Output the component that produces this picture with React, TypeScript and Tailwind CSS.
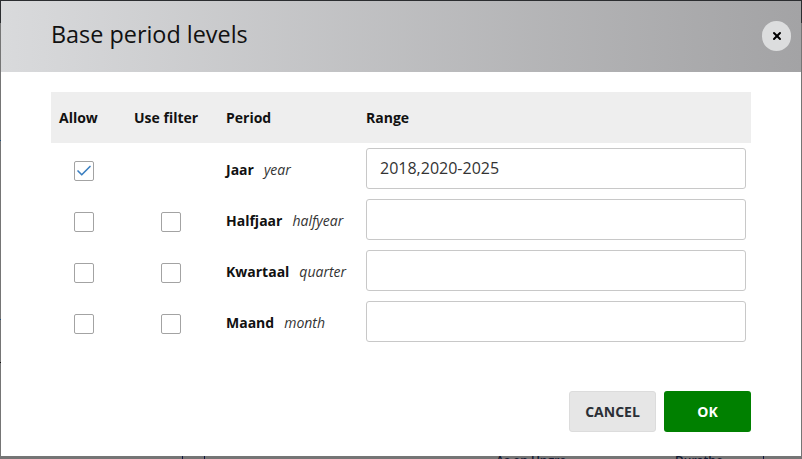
import { useState } from 'react';
import { Check, X } from 'lucide-react';

const levels = [
  { name: 'Jaar', unit: 'year', allow: true, filter: false, range: '2018,2020-2025' },
  { name: 'Halfjaar', unit: 'halfyear', allow: false, filter: true, range: '' },
  { name: 'Kwartaal', unit: 'quarter', allow: false, filter: true, range: '' },
  { name: 'Maand', unit: 'month', allow: false, filter: true, range: '' }
];

const Box = ({ checked }: { checked?: boolean }) => (
  <span className="flex h-5 w-5 items-center justify-center rounded-[2px] border border-[#a3a3a3] bg-white">
    {checked && <Check size={18} strokeWidth={2.2} className="shrink-0 text-[#3a7fc1]" />}
  </span>
);

const App = () => {
  const [rows] = useState(levels);

  return (
    <div className="relative flex h-[459px] w-[802px] flex-col overflow-hidden bg-[#757575] pb-[3px] pl-px pr-px pt-px font-['Open_Sans',sans-serif] text-[#111]">
      {/* bits of the page behind the backdrop */}
      <span className="absolute left-0 right-0 top-0 h-px bg-[#2b2d30]" />
      <span className="absolute left-0 top-0 h-[23px] w-px bg-[#2b2d30]" />
      <span className="absolute right-0 top-0 h-[23px] w-px bg-[#2b2d30]" />
      <span className="absolute left-0 top-[140px] h-px w-px bg-[#1f4f7a]" />
      <span className="absolute left-0 top-[319px] h-px w-px bg-[#1f4f7a]" />
      <span className="absolute left-0 top-[362px] h-px w-px bg-[#111]" />
      <span className="absolute bottom-0 left-[182px] h-[3px] w-px bg-[#101840]" />
      <span className="absolute bottom-0 left-[204px] h-[3px] w-px bg-[#101840]" />
      <span className="absolute bottom-0 left-[763px] h-[3px] w-px bg-[#101840]" />
      <span className="absolute left-[496px] top-[453px] text-xs font-semibold leading-4 text-[#101830]">As on Ungro</span>
      <span className="absolute left-[675px] top-[453px] text-xs font-semibold leading-4 text-[#101830]">Duratho</span>

      <div className="relative flex flex-1 flex-col bg-white">
        <div className="flex h-[71px] items-center justify-between bg-gradient-to-r from-[#d9dadc] to-[#a3a3a5] pl-[50px] pr-[10px]">
          <h2 className="mb-[3px] text-[23.4px] leading-none text-[#111]">Base period levels</h2>
          <button className="mb-px flex h-[30px] w-[29px] items-center justify-center rounded-full bg-[#dcddde] text-black">
            <X size={12} strokeWidth={4} />
          </button>
        </div>

        <div className="px-[50px] pt-[20px]">
          <div className="flex h-[51px] items-center bg-[#eeeeee] text-sm font-bold">
            <span className="w-[75px] pl-2">Allow</span>
            <span className="w-[100px] pl-2">Use filter</span>
            <span className="w-[140px]">Period</span>
            <span>Range</span>
          </div>

          <div className="flex flex-col gap-[11px] pt-[5px]">
            {rows.map(row => (
              <div key={row.name} className="flex h-10 items-center">
                <div className="flex w-[64px] justify-center pl-[1px] pt-[6px]">
                  <Box checked={row.allow} />
                </div>
                <div className="flex w-[110px] justify-center pl-[1px] pt-[6px]">
                  {row.filter && <Box />}
                </div>
                <div className="w-[141px] pl-[1px] pt-[4px] text-sm">
                  <b>{row.name}</b>
                  <i className="ml-[10px] text-[#333]">{row.unit}</i>
                </div>
                <input
                  readOnly
                  value={row.range}
                  className="h-[41px] w-[380px] rounded-[3px] border border-[#c8c8c8] px-[13px] text-base text-[#333] outline-none"
                />
              </div>
            ))}
          </div>

          <div className="flex justify-end gap-2 pt-[50px]">
            <button className="h-[41px] w-[87px] rounded-[3px] border border-[#dcdcdc] bg-[#e6e6e6] text-sm font-bold text-[#2b2f36]">
              CANCEL
            </button>
            <button className="h-[41px] w-[87px] rounded-[3px] bg-[#008000] text-sm font-bold text-white">
              OK
            </button>
          </div>
        </div>
      </div>
    </div>
  );
};

export default App;
